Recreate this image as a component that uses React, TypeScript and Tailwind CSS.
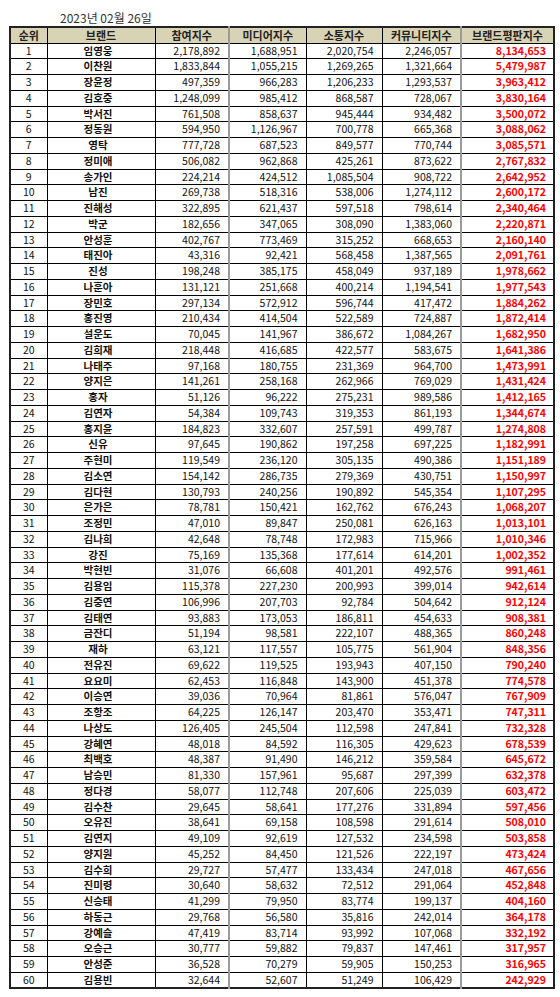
import React from "react";

type Row = [string, string, string, string, string, string];

const rows: Row[] = [
  ["임영웅", "2,178,892", "1,688,951", "2,020,754", "2,246,057", "8,134,653"],
  ["이찬원", "1,833,844", "1,055,215", "1,269,265", "1,321,664", "5,479,987"],
  ["장윤정", "497,359", "966,283", "1,206,233", "1,293,537", "3,963,412"],
  ["김호중", "1,248,099", "985,412", "868,587", "728,067", "3,830,164"],
  ["박서진", "761,508", "858,637", "945,444", "934,482", "3,500,072"],
  ["정동원", "594,950", "1,126,967", "700,778", "665,368", "3,088,062"],
  ["영탁", "777,728", "687,523", "849,577", "770,744", "3,085,571"],
  ["정미애", "506,082", "962,868", "425,261", "873,622", "2,767,832"],
  ["송가인", "224,214", "424,512", "1,085,504", "908,722", "2,642,952"],
  ["남진", "269,738", "518,316", "538,006", "1,274,112", "2,600,172"],
  ["진해성", "322,895", "621,437", "597,518", "798,614", "2,340,464"],
  ["박군", "182,656", "347,065", "308,090", "1,383,060", "2,220,871"],
  ["안성훈", "402,767", "773,469", "315,252", "668,653", "2,160,140"],
  ["태진아", "43,316", "92,421", "568,458", "1,387,565", "2,091,761"],
  ["진성", "198,248", "385,175", "458,049", "937,189", "1,978,662"],
  ["나훈아", "131,121", "251,668", "400,214", "1,194,541", "1,977,543"],
  ["장민호", "297,134", "572,912", "596,744", "417,472", "1,884,262"],
  ["홍진영", "210,434", "414,504", "522,589", "724,887", "1,872,414"],
  ["설운도", "70,045", "141,967", "386,672", "1,084,267", "1,682,950"],
  ["김희재", "218,448", "416,685", "422,577", "583,675", "1,641,386"],
  ["나태주", "97,168", "180,755", "231,369", "964,700", "1,473,991"],
  ["양지은", "141,261", "258,168", "262,966", "769,029", "1,431,424"],
  ["홍자", "51,126", "96,222", "275,231", "989,586", "1,412,165"],
  ["김연자", "54,384", "109,743", "319,353", "861,193", "1,344,674"],
  ["홍지윤", "184,823", "332,607", "257,591", "499,787", "1,274,808"],
  ["신유", "97,645", "190,862", "197,258", "697,225", "1,182,991"],
  ["주현미", "119,549", "236,120", "305,135", "490,386", "1,151,189"],
  ["김소연", "154,142", "286,735", "279,369", "430,751", "1,150,997"],
  ["김다현", "130,793", "240,256", "190,892", "545,354", "1,107,295"],
  ["은가은", "78,781", "150,421", "162,762", "676,243", "1,068,207"],
  ["조정민", "47,010", "89,847", "250,081", "626,163", "1,013,101"],
  ["김나희", "42,648", "78,748", "172,983", "715,966", "1,010,346"],
  ["강진", "75,169", "135,368", "177,614", "614,201", "1,002,352"],
  ["박현빈", "31,076", "66,608", "401,201", "492,576", "991,461"],
  ["김용임", "115,378", "227,230", "200,993", "399,014", "942,614"],
  ["김중연", "106,996", "207,703", "92,784", "504,642", "912,124"],
  ["김태연", "93,883", "173,053", "186,811", "454,633", "908,381"],
  ["금잔디", "51,194", "98,581", "222,107", "488,365", "860,248"],
  ["재하", "63,121", "117,557", "105,775", "561,904", "848,356"],
  ["전유진", "69,622", "119,525", "193,943", "407,150", "790,240"],
  ["요요미", "62,453", "116,848", "143,900", "451,378", "774,578"],
  ["이승연", "39,036", "70,964", "81,861", "576,047", "767,909"],
  ["조항조", "64,225", "126,147", "203,470", "353,471", "747,311"],
  ["나상도", "126,405", "245,504", "112,598", "247,841", "732,328"],
  ["강혜연", "48,018", "84,592", "116,305", "429,623", "678,539"],
  ["최백호", "48,387", "91,490", "146,212", "359,584", "645,672"],
  ["남승민", "81,330", "157,961", "95,687", "297,399", "632,378"],
  ["정다경", "58,077", "112,748", "207,606", "225,039", "603,472"],
  ["김수찬", "29,645", "58,641", "177,276", "331,894", "597,456"],
  ["오유진", "38,641", "69,158", "108,598", "291,614", "508,010"],
  ["김연지", "49,109", "92,619", "127,532", "234,598", "503,858"],
  ["양지원", "45,252", "84,450", "121,526", "222,197", "473,424"],
  ["김수희", "29,727", "57,477", "133,434", "247,018", "467,656"],
  ["진미령", "30,640", "58,632", "72,512", "291,064", "452,848"],
  ["신승태", "41,299", "79,950", "83,774", "199,137", "404,160"],
  ["하동근", "29,768", "56,580", "35,816", "242,014", "364,178"],
  ["강예슬", "47,419", "83,714", "93,992", "107,068", "332,192"],
  ["오승근", "30,777", "59,882", "79,837", "147,461", "317,957"],
  ["안성준", "36,528", "70,279", "59,905", "150,253", "316,965"],
  ["김용빈", "32,644", "52,607", "51,249", "106,429", "242,929"],
];

const headers = ["순위", "브랜드", "참여지수", "미디어지수", "소통지수", "커뮤니티지수", "브랜드평판지수"];

// gray separators sit before 미디어지수 and 브랜드평판지수
const grayLeft = [3, 6];

export default function App() {
  return (
    <div className="w-[560px] h-[997px] bg-white font-['Noto_Sans_CJK_KR','Noto_Sans',sans-serif] text-[#111]">
      <div className="h-[26px] pl-[60px] pt-[11px] text-[12px] leading-[14px] text-[#333]">2023년 02월 26일</div>

      <table className="ml-[9px] w-[544px] table-fixed border-collapse border-2 border-[#222]">
        <colgroup>
          <col className="w-[37px]" />
          <col className="w-[108px]" />
          <col className="w-[74px]" />
          <col className="w-[77px]" />
          <col className="w-[76px]" />
          <col className="w-[79px]" />
          <col className="w-[93px]" />
        </colgroup>
        <thead>
          <tr className="h-[16px] bg-[#D9D3B6]">
            {headers.map((h, i) => (
              <th
                key={h}
                className={
                  "border border-black p-0 text-center text-[11px] font-bold leading-none text-[#222] " +
                  (grayLeft.includes(i) ? "border-l-2 border-l-[#9a9a9a]" : "")
                }
              >
                {h}
              </th>
            ))}
          </tr>
        </thead>
        <tbody>
          {rows.map((r, idx) => (
            <tr key={r[0]} className="h-[15.75px]">
              <td className="border border-black p-0 text-center text-[10.5px] leading-none">{idx + 1}</td>
              <td className="border border-black p-0 pr-[6px] text-center text-[10.5px] font-bold leading-none">{r[0]}</td>
              <td className="border border-black p-0 pr-[8px] text-right text-[10.5px] leading-none">{r[1]}</td>
              <td className="border border-black border-l-2 border-l-[#9a9a9a] p-0 pr-[8px] text-right text-[10.5px] leading-none">
                {r[2]}
              </td>
              <td className="border border-black p-0 pr-[8px] text-right text-[10.5px] leading-none">{r[3]}</td>
              <td className="border border-black p-0 pr-[8px] text-right text-[10.5px] leading-none">{r[4]}</td>
              <td className="border border-black border-l-2 border-l-[#9a9a9a] p-0 pr-[7px] text-right text-[10.5px] font-bold leading-none text-[#f00]">
                {r[5]}
              </td>
            </tr>
          ))}
        </tbody>
      </table>
    </div>
  );
}
